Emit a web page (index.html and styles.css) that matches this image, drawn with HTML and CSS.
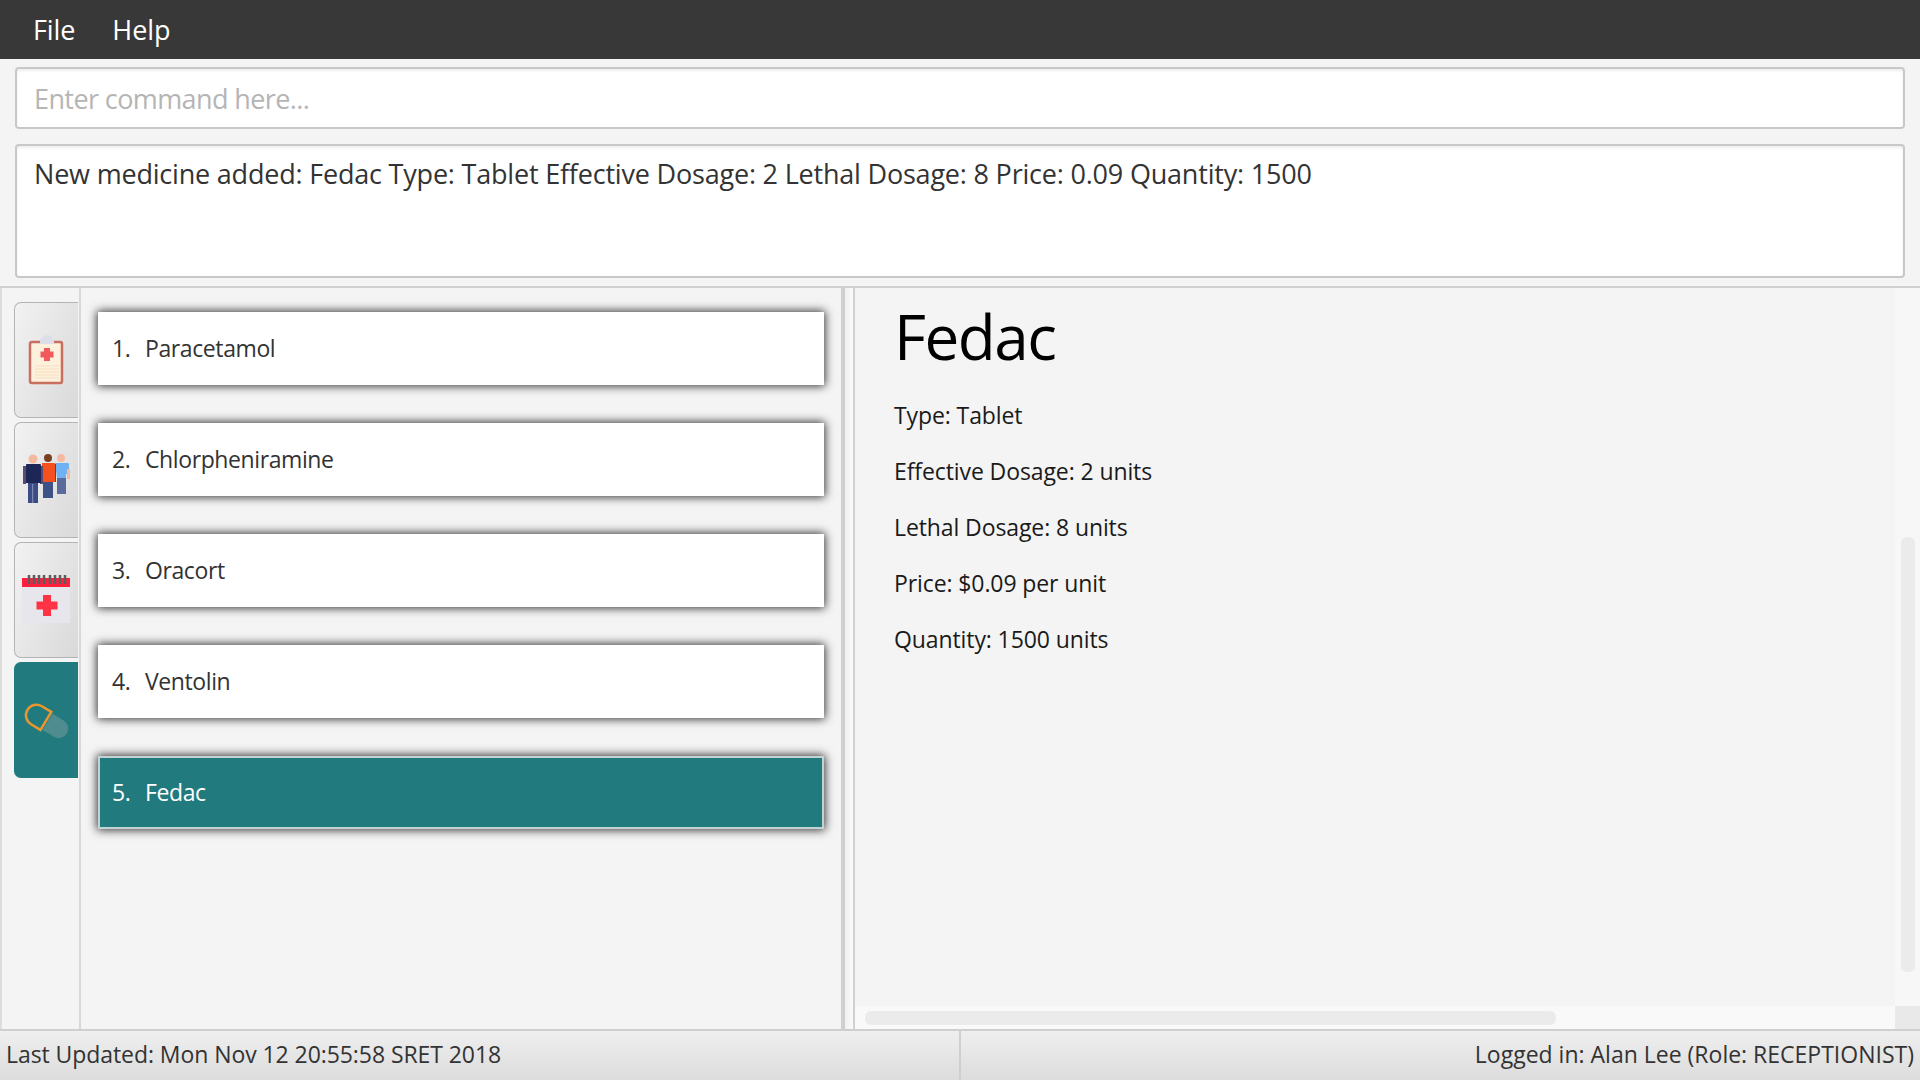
FILE: index.html
```html
<!DOCTYPE html>
<html lang="en">
<head>
  <meta charset="UTF-8" />
  <title>Medicine list</title>
  <link rel="stylesheet" href="styles.css">
</head>
<body>
  <div class="menu-bar">
    <span class="menu-item">File</span>
    <span class="menu-item">Help</span>
  </div>

  <div class="top-boxes">
    <input class="command-box" type="text" placeholder="Enter command here...">
    <div class="result-box">New medicine added: Fedac Type: Tablet Effective Dosage: 2 Lethal Dosage: 8 Price: 0.09 Quantity: 1500</div>
  </div>

  <div class="main">
    <div class="tabs">
      <div class="tab">
        <svg viewBox="0 0 64 116" width="64" height="116">
          <path d="M27 39 q1 -6 6 -6 q5 0 6 6z" fill="#dcdfe8"/>
          <rect x="16" y="40" width="32" height="41" rx="2" fill="#fdf0dc" stroke="#c96f5f" stroke-width="2.5"/>
          <rect x="26" y="37" width="14" height="5" fill="#dcdfe8"/>
          <path d="M30 46h6v3.500h3.500v6h-3.500v3.500h-6v-3.500h-3.500v-6h3.500z" fill="#f2595c"/>
          <path d="M21 64h24M21 67h24M21 70h24M21 73h24M21 76h24" stroke="#f6dfbd" stroke-width="1"/>
        </svg>
      </div>
      <div class="tab">
        <svg viewBox="0 0 64 116" width="64" height="116">
          <circle cx="47" cy="36" r="4" fill="#f5b9a0"/>
          <rect x="43" y="56" width="9" height="16" fill="#5a6a9c"/>
          <path d="M41 41h13q1 0 1 1v10h-3v4h-9z" fill="#6fb2f2"/>
          <rect x="53" y="47" width="3" height="10" fill="#f5b9a0"/>
          <circle cx="34" cy="36" r="4" fill="#7b3f24"/>
          <rect x="29" y="59" width="10" height="17" fill="#3f5288"/>
          <rect x="39" y="42" width="3" height="18" fill="#7b3f24"/>
          <path d="M28 41h12q1 0 1 1v18h-13z" fill="#f4511e"/>
          <circle cx="19" cy="37" r="4.500" fill="#f5b9a0"/>
          <rect x="14" y="60" width="10" height="21" fill="#3c4c86"/>
          <path d="M18.700 62v19" stroke="#8d96b8" stroke-width="1"/>
          <rect x="9" y="44" width="3" height="18" fill="#5a4a72"/>
          <rect x="26" y="44" width="3" height="18" fill="#5a4a72"/>
          <path d="M12 43q0 -1 1 -1h13q1 0 1 1v18h-15z" fill="#1c2758"/>
        </svg>
      </div>
      <div class="tab">
        <svg viewBox="0 0 64 116" width="64" height="116">
          <rect x="8" y="45" width="48" height="36" fill="#e6e6ec"/>
          <rect x="8" y="36" width="48" height="9" fill="#ff1f3d"/>
          <path d="M15 33v9M20 33v9M25 33v9M30 33v9M36 33v9M41 33v9M46 33v9M51 33v9" stroke="#5c5c5c" stroke-width="2.500"/>
          <path d="M29 53h8v6.500h6.500v8h-6.500v6.500h-8v-6.500h-6.500v-8h6.500z" fill="#ff3344"/>
        </svg>
      </div>
      <div class="tab tab-selected">
        <svg viewBox="0 0 64 116" width="64" height="116">
          <g transform="rotate(31 33 59)">
            <path d="M34 50h13a9.500 9.500 0 0 1 0 19h-13z" fill="#4f8c90"/>
            <path d="M32 49h-11a10.500 10.500 0 0 0 0 21h11z" fill="none" stroke="#e8962e" stroke-width="2.500"/>
          </g>
        </svg>
      </div>
    </div>

    <div class="list-pane">
      <div class="card"><span class="card-num">1.</span>Paracetamol</div>
      <div class="card"><span class="card-num">2.</span>Chlorpheniramine</div>
      <div class="card"><span class="card-num">3.</span>Oracort</div>
      <div class="card"><span class="card-num">4.</span>Ventolin</div>
      <div class="card card-selected"><span class="card-num">5.</span>Fedac</div>
    </div>

    <div class="splitter"></div>

    <div class="detail-pane">
      <div class="detail">
        <h1 class="detail-name">Fedac</h1>
        <p class="detail-line">Type: Tablet</p>
        <p class="detail-line">Effective Dosage: 2 units</p>
        <p class="detail-line">Lethal Dosage: 8 units</p>
        <p class="detail-line">Price: $0.09 per unit</p>
        <p class="detail-line">Quantity: 1500 units</p>
      </div>
      <div class="vscroll"><div class="vthumb"></div></div>
      <div class="hscroll"><div class="hthumb"></div></div>
      <div class="scroll-corner"></div>
    </div>
  </div>

  <div class="status-bar">
    <div class="status-left">Last Updated: Mon Nov 12 20:55:58 SRET 2018</div>
    <div class="status-right">Logged in: Alan Lee (Role: RECEPTIONIST)</div>
  </div>
</body>
</html>
```

FILE: styles.css
```css
* { box-sizing: border-box; }
html, body {
  margin: 0; padding: 0; height: 100%;
  font-family: "Open Sans", "Noto Sans", sans-serif;
  background-color: #f4f4f4;
  color: #333;
  overflow: hidden;
}
body {
  display: flex;
  flex-direction: column;
  height: 1080px;
}
.menu-bar {
  height: 59px;
  background: #383838;
  display: flex;
  align-items: center;
  padding: 0 0 1px 33px;
  gap: 37px;
  flex: none;
}
.menu-item {
  color: #fff;
  font-size: 27px;
  letter-spacing: -0.1px;
}
.top-boxes {
  height: 227px;
  padding: 8px 15px 0;
  flex: none;
  display: flex;
  flex-direction: column;
  gap: 15px;
}
.command-box {
  height: 62px;
  width: 100%;
  border: 2px solid #c8c8c8;
  border-radius: 4px;
  background: #fff;
  padding: 0 17px;
  font-family: inherit;
  font-size: 27px;
  letter-spacing: -0.6px;
  outline: none;
  box-shadow: inset 0 2px 3px #eee;
}
.command-box::placeholder { color: #b5b5b5; opacity: 1; }
.result-box {
  height: 134px;
  border: 2px solid #c8c8c8;
  border-radius: 4px;
  background: #fff;
  padding: 9px 17px;
  font-size: 27px;
  letter-spacing: -0.2px;
  color: #333;
  white-space: nowrap;
  box-shadow: inset 0 2px 3px #eee;
}
.main {
  flex: 1;
  display: flex;
  border-top: 2px solid #d0d0d0;
  border-bottom: 2px solid #cfcfcf;
  min-height: 0;
}
.tabs {
  width: 81px;
  flex: none;
  padding: 14px 0 0 12px;
  display: flex;
  flex-direction: column;
  gap: 4px;
  border-left: 2px solid #ddd;
  border-right: 2px solid #d8d8d8;
}
.tab {
  width: 64px;
  height: 116px;
  flex: none;
  border: 1px solid #b4b4b4;
  border-right: none;
  border-radius: 7px 0 0 7px;
  background: linear-gradient(110deg, #f2f2f2, #d9d9d9);
}
.tab svg {
  display: block;
  margin-left: -1px;
  margin-top: -1px;
  filter: blur(0.4px);
}
.tab-selected {
  background: #217a7e;
  border-color: #217a7e;
}
.list-pane {
  width: 764px;
  flex: none;
  padding: 24px 17px 0 17px;
  display: flex;
  flex-direction: column;
  gap: 38px;
  border-right: 4px solid #d0d0d0;
}
.card {
  height: 73px;
  flex: none;
  background: #fff;
  box-shadow: 0 0 9px 1px rgba(0, 0, 0, 0.8);
  display: flex;
  align-items: center;
  padding: 0 0 1px 14px;
  font-size: 23px;
  letter-spacing: -0.4px;
  color: #333;
}
.card-num { width: 33px; }
.card-selected {
  background: #217a7e;
  border: 2px solid #c3d3d3;
  padding-left: 12px;
  color: #fff;
}
.splitter {
  width: 10px;
  flex: none;
  background: linear-gradient(90deg, #f0f0f0, #fafafa);
  border-right: 2px solid #d0d0d0;
}
.detail-pane {
  flex: 1;
  display: grid;
  grid-template-columns: 1fr 25px;
  grid-template-rows: 1fr 23px;
  min-width: 0;
}
.detail {
  padding: 0 0 0 39px;
  overflow: hidden;
}
.detail-name {
  margin: 0 0 15px;
  font-size: 62px;
  font-weight: 400;
  letter-spacing: -1.5px;
  line-height: 96px;
  color: #000;
}
.detail-line {
  margin: 0 0 23px;
  font-size: 23px;
  line-height: 33px;
  letter-spacing: -0.1px;
  color: #1a1a1a;
}
.vscroll {
  background: #f7f7f7;
  padding: 249px 5px 0 6px;
}
.vthumb {
  height: 435px;
  background: #ebebeb;
  border-radius: 6px;
}
.hscroll {
  background: #f9f9f9;
  padding: 5px 0 0 10px;
}
.hthumb {
  width: 691px;
  height: 14px;
  background: #ebebeb;
  border-radius: 6px;
}
.scroll-corner { background: #e9e9e9; }
.status-bar {
  height: 49px;
  flex: none;
  display: flex;
  align-items: center;
  background: linear-gradient(#efefef, #dcdcdc);
  font-size: 23px;
  color: #333;
}
.status-left {
  width: 961px;
  height: 100%;
  display: flex;
  align-items: center;
  padding: 0 0 3px 6px;
  letter-spacing: -0.07px;
  border-right: 2px solid #cfcfcf;
}
.status-right {
  flex: 1;
  text-align: right;
  padding: 0 6px 3px 0;
}
```
